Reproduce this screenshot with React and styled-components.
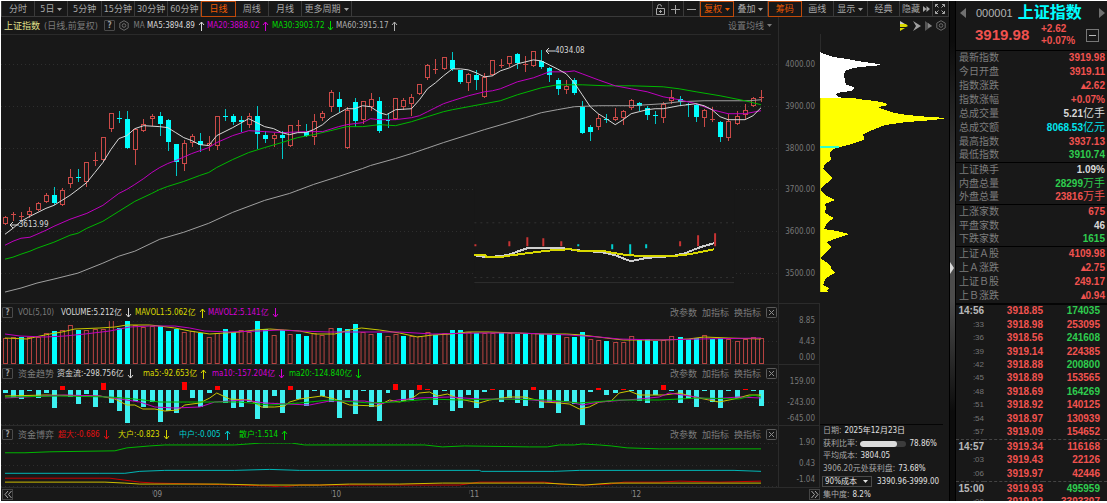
import React, { useState } from 'react';
import styled, { createGlobalStyle, css } from 'styled-components';

const RED = '#f0524f';
const GREEN = '#2ecc4e';
const CYAN = '#00ffff';
const WHITE = '#d8d8d8';
const MAGENTA = '#d400d4';
const LINE = '#2b2b2b';

const GlobalStyle = createGlobalStyle`
  * {
    box-sizing: border-box;
  }

  body {
    margin: 0;
    background: #fff;
    font-family: 'DejaVu Sans Condensed', 'Noto Sans CJK SC', sans-serif;
    font-size: 8px;
    line-height: 10px;
    color: #8a8a8a;
  }

  button, select {
    font: inherit;
    color: inherit;
    background: none;
    border: 0;
    padding: 0;
    margin: 0;
    cursor: pointer;
  }
`;

const Page = styled.div`
  display: grid;
  grid-template-columns: minmax(0, 1fr) 7px 151px;
  height: 100vh;
  padding: 1px 0 2px 1px;
  background: #fff;
`;

const Main = styled.main`
  display: grid;
  grid-template-rows: 16px minmax(0, 1fr);
  min-height: 0;
  background: #181818;
`;

const Toolbar = styled.nav`
  display: flex;
  justify-content: space-between;
  border-bottom: 1px solid #3a3a3a;
`;

const ToolGroup = styled.div`
  display: flex;
  width: ${(p) => p.$width}px;
`;

const ToolButton = styled.button`
  display: flex;
  align-items: center;
  justify-content: center;
  gap: 3px;
  flex: ${(p) => p.$grow || 33} 1 0;
  min-width: 0;
  height: 16px;
  font-size: 9px;
  white-space: nowrap;
  color: #a6a6a6;
  border: solid #3a3a3a;
  border-width: 0 1px 0 0;

  &:first-child {
    border-left-width: 1px;
  }

  ${(p) => p.$active && css`
    color: #f05a00;
    border: 1px solid #c04a0a;
  `}
`;

const Workspace = styled.div`
  display: grid;
  grid-template-columns: minmax(0, 1fr) 129px;
  min-height: 0;
`;

const Charts = styled.div`
  display: grid;
  grid-template-rows: minmax(0, 1fr) 61px 61px 62px 13px;
  min-height: 0;
`;

const Panel = styled.section`
  display: grid;
  grid-template-columns: minmax(0, 1fr) 41px;
  min-height: 0;
  border-bottom: 1px solid ${LINE};
`;

const Plot = styled.div`
  position: relative;
  display: flex;
  flex-direction: column;
  min-width: 0;
  min-height: 0;
  border-right: 1px solid ${LINE};
`;

const PlotHeader = styled.header`
  display: flex;
  align-items: center;
  justify-content: space-between;
  height: 17px;
  padding: ${(p) => (p.$main ? '0 6px 0 3px' : '0 0 0 1px')};
  white-space: nowrap;
  flex: none;
`;

const Canvas = styled.svg`
  display: block;
  width: 100%;
  flex: 1;
  min-height: 0;
`;

const Legend = styled.div`
  display: flex;
  align-items: center;
`;

const Name = styled.span`
  width: ${(p) => p.$width}px;
  color: ${(p) => p.$color || '#7b7b7b'};
  font-size: ${(p) => p.$size || 9}px;
`;

const Stat = styled.span`
  display: flex;
  align-items: center;
  gap: 3px;
  width: ${(p) => p.$width}px;
  color: ${(p) => p.$color};
`;

const HelpButton = styled.button`
  width: 11px;
  height: 11px;
  margin-right: ${(p) => p.$gap || 5}px;
  font-size: 8px;
  line-height: 9px;
  font-weight: bold;
  border: 1px solid #4a4a4a;
  border-radius: 1px;
  color: #9a9a9a;
`;

const Actions = styled.div`
  display: flex;
  align-items: center;
  gap: 5px;
  font-size: 9px;
  color: #7b7b7b;

  button {
    display: flex;
    align-items: center;
    gap: 3px;
  }
`;

const Axis = styled.div`
  display: flex;
  flex-direction: column;
  align-items: flex-end;
  padding: 12px 4px 0 0;
  border-right: 1px solid ${LINE};
  color: #777;

  span + span {
    margin-top: 11px;
  }

  span + span + span {
    margin-top: 6px;
  }
`;

const PriceAxis = styled(Axis)`
  justify-content: space-between;
  padding: 43px 4px 24px 0;
  border-right-color: transparent;

  span + span,
  span + span + span {
    margin-top: 0;
  }
`;

const Mark = styled.span`
  position: absolute;
  display: flex;
  align-items: center;
  left: ${(p) => p.$left}%;
  top: ${(p) => p.$top}%;
  color: ${WHITE};
`;

const Timeline = styled.footer`
  display: grid;
  grid-template-columns: 151fr 179fr 138fr 162fr 189fr;
`;

const Month = styled.div`
  display: flex;
  align-items: center;
  justify-content: space-between;
  padding-left: ${(p) => (p.$first ? 1 : 0)}px;

  span::before {
    content: '';
    display: inline-block;
    height: 4px;
    border-left: 1px solid #333;
    vertical-align: top;
  }
`;

const EdgeButton = styled.button`
  display: flex;
  align-items: center;
  justify-content: center;
  width: 11px;
  height: 11px;
  margin-left: ${(p) => (p.$end ? 'auto' : 0)};
  border: 1px solid #444;
`;

const Chips = styled.section`
  display: grid;
  grid-template-rows: 17px minmax(0, 270fr) minmax(0, 120fr) 77px;
  min-height: 0;
`;

const ChipHeader = styled.header`
  display: flex;
  align-items: center;
  justify-content: flex-end;
  gap: 3px;
  padding-right: 3px;

  button {
    display: flex;
  }
`;

const ChipCanvas = styled(Canvas)`
  height: 100%;
`;

const ChipInfo = styled.div`
  grid-row: 4;
  display: flex;
  flex-direction: column;
  justify-content: space-around;
  margin-right: 6px;
  padding-left: 3px;
  border-top: 1px solid #050505;
  white-space: nowrap;
`;

const ChipLine = styled.div`
  display: flex;
  align-items: center;
  gap: ${(p) => p.$gap || 3}px;
  color: #a8a8a8;

  b {
    font-weight: normal;
    color: #e0e0e0;
  }
`;

const Meter = styled.div`
  width: 46px;
  height: 6px;
  border-radius: 3px;
  background: #3c3c3c;
  overflow: hidden;

  div {
    height: 100%;
    border-radius: 3px;
    background: #dcdcdc;
  }
`;

const CostSelect = styled.label`
  display: flex;
  align-items: center;
  width: 50px;
  height: 11px;
  margin-left: -1px;
  padding: 0 3px 0 2px;
  border: 1px solid #4a4a4a;
  color: #e0e0e0;

  select {
    appearance: none;
    flex: 1;
    min-width: 0;
    line-height: 9px;
    outline: none;
  }
`;

const Splitter = styled.div`
  display: flex;
  align-items: center;
  padding-top: 34px;
  border: solid #000;
  border-width: 0 1px;
  background: linear-gradient(#0c0c0c 8%, #4c4c4c 48%, #4c4c4c 60%, #0c0c0c 82%);
`;

const Side = styled.aside`
  display: flex;
  flex-direction: column;
  min-height: 0;
  overflow: hidden;
  background: #181818;
  font-family: 'Liberation Sans', 'Noto Sans CJK SC', sans-serif;
`;

const QuoteHead = styled.header`
  height: 49px;
  flex: none;
  padding: 2px 1px 0 3px;
`;

const QuoteName = styled.div`
  display: flex;
  align-items: center;
  height: 20px;
  font-size: 11px;
  color: #b4b4b4;

  h1 {
    margin: 0 0 0 5px;
    font-size: 16px;
    line-height: 20px;
    color: ${CYAN};
  }

  button {
    display: flex;
  }

  span {
    margin-left: 10px;
  }

  button:last-child {
    margin-left: auto;
  }
`;

const QuotePrice = styled.div`
  display: flex;
  align-items: center;
  padding: 0 7px 0 16px;
  font-weight: bold;
  font-size: 10px;
  line-height: 12px;
  color: ${RED};

  strong {
    width: 66px;
    font-size: 15px;
  }

  button {
    display: flex;
    align-items: center;
    justify-content: center;
    width: 13px;
    height: 13px;
    margin-left: auto;
    border: 1px solid #777;
  }
`;

const QuoteTable = styled.table`
  width: 100%;
  flex: none;
  border-collapse: collapse;
  font-size: 10px;
  line-height: 12px;

  tbody {
    border-top: 1px solid #000;
  }

  th, td {
    height: 14px;
    padding: 0 2px 0 3px;
    white-space: nowrap;
  }

  th {
    font-weight: normal;
    text-align: left;
    color: #7d7d7d;
  }

  td {
    font-weight: bold;
    text-align: right;
  }

  small {
    font-size: 11px;
    line-height: 10px;
    font-weight: normal;
  }
`;

const Value = styled.td`
  color: ${(p) => p.$color};
`;

const TickArea = styled.div`
  flex: 1;
  min-height: 0;
  overflow: hidden;
  border-top: 2px solid #050505;
`;

const TickTable = styled.table`
  width: 100%;
  height: 104%;
  table-layout: fixed;
  border-collapse: collapse;
  font-size: 10px;
  line-height: 10px;
  font-weight: bold;

  th, td {
    padding: 0;
    text-align: right;
  }

  th {
    width: 28px;
  }

  td {
    width: 59px;
    color: ${RED};
  }

  td:last-child {
    width: auto;
    padding-right: 7px;
  }
`;

const TickRow = styled.tr`
  border-top: ${(p) => (p.$divided ? '1px dashed #444' : '0')};

  th {
    font-size: ${(p) => (p.$minute ? 10 : 8)}px;
    font-weight: ${(p) => (p.$minute ? 'bold' : 'normal')};
    color: ${(p) => (p.$minute ? '#b8b8b8' : '#757575')};
  }

  td:last-child {
    color: ${(p) => (p.$down ? GREEN : RED)};
  }
`;

// colour, high, body top, body bottom, low
const CANDLES = `r217,218,225,225 r213,215,216,221 r213,217,218,221 r208,212,216,218 r203,204,211,211 r194,196,203,203
c188,196,204,205 r189,191,206,206 r170,178,185,188 c170,178,179,182 r162,162,183,187 r152,160,161,165
r137,137,160,160 r113,113,129,131 c111,118,119,122 c111,119,148,148 r129,129,150,164 r119,124,131,131
r114,116,119,125 c112,116,124,135 c119,120,142,150 c144,144,162,176 r140,143,164,171 r134,136,143,146
c133,141,145,151 r136,143,146,150 r116,116,146,149 c109,116,117,120 c114,116,122,124 c116,120,122,131
r113,116,125,127 c106,116,134,148 c131,135,139,142 r133,135,139,146 c131,135,138,158 r125,125,146,146
r120,125,126,131 c124,132,136,136 r114,121,137,144 r111,113,118,120 r90,92,107,111 c92,99,107,111
r107,110,148,148 c98,102,121,126 r101,101,120,123 r93,99,107,110 c97,101,131,132 c113,120,121,127
r98,98,119,119 r98,100,107,109 r94,97,104,115 r84,84,94,94 r64,65,78,79 r59,69,70,73
r57,57,69,69 c52,60,69,70 c70,70,82,83 r73,74,83,90 c70,75,80,89 r73,77,97,97
r60,60,75,75 r59,65,66,67 r56,56,64,66 c53,54,63,68 r56,64,65,71 r51,51,66,66
c50,61,67,68 c67,68,75,81 c78,80,89,94 r80,86,90,93 c78,80,93,94 c101,107,133,133
c125,127,132,140 r114,118,127,129 c114,119,120,122 r108,117,120,120 r110,111,118,124 r99,100,108,109
c102,103,106,110 c106,108,115,119 c111,115,116,123 r102,104,118,122 r90,97,101,103 c96,99,102,105
c103,104,105,116 c104,105,117,121 r109,110,118,126 r107,119,120,121 c121,122,137,141 r114,121,138,140
r111,116,124,124 r104,110,115,118 r97,98,106,106 r90,97,98,101`
  .split(/\s+/)
  .map((s) => ({ up: s[0] === 'r', v: s.slice(1).split(',').map(Number) }));

const VOLUMES = `r25 r26 c26 r26 r26 r30 c32 r33 r38 c33 r33 r34 r34 r43 c35 c42 r38 r36 r37 c37 c32 c34 r31 r32
c30 r26 r30 c34 c31 r33 r31 c43 c34 r28 c33 r29 c29 c27 r30 r28 r35 c35 c34 c39 r31 r29 c30 r27 r29 c27 r27
r27 r31 c28 r30 c33 c33 r31 c30 r30 r30 c30 r30 c29 c29 r30 c29 c29 c29 r26 c26 c31 r24 r23 c22 r21 r21 r27
c23 c24 c22 r23 r27 c26 c24 c25 r28 c24 c25 r24 r22 r24 r26 r25`
  .split(/\s+/)
  .map((s) => ({ up: s[0] === 'r', h: Number(s.slice(1)) }));

const FLOWS = [
  -3, -8, -9, -1, -8, -3, -18, 4, -7, -14, -4, -17, 7, -13, -21, -33, -11, -17, -12, -32, -21, -23, 9, -8,
  -17, -3, 4, -13, -18, -17, -12, -29, -18, -6, -23, 4, -9, -16, -1, -6, -12, -28, -8, -24, -1, -17, -31, -3,
  6, -11, -10, 5, 1, -15, -1, -21, -18, -5, -18, -2, 1, -12, -8, -13, -16, 3, -18, -12, -23, -11, -14, -35,
  -2, 2, -5, -3, 1, -1, -11, -13, -5, 5, -1, -13, -9, -17, -1, -12, -18, -1, -8, 1, -1, -16,
];

const PRICE_LINES = [
  ['#a0a0a0', '5,293 21,289 37,284 54,280 78,274 103,264 119,257 135,252 160,240 184,233 209,224 233,213 265,201 290,194 314,185 339,177 363,169 371,166 396,159 412,154 444,143 485,130 526,118 542,113 558,110 575,107 599,106 632,106 664,104 680,102 705,101 738,101 750,101 762,100'],
  ['#00b800', '5,260 13,258 21,255 30,252 37,249 54,243 70,236 78,234 87,229 103,222 119,212 135,202 152,194 160,190 168,187 184,182 200,176 209,173 217,168 233,160 249,153 265,148 282,143 298,138 314,135 331,131 347,127 363,127 380,125 396,126 412,122 428,117 444,112 453,110 469,107 485,104 501,101 518,95 542,88 558,85 583,85 607,86 632,86 664,87 680,89 697,92 721,96 746,101 762,105'],
  ['#c000c0', '5,246 13,242 21,239 30,238 37,235 46,231 54,227 70,220 87,214 95,210 103,206 111,200 119,194 127,190 135,185 144,179 152,173 160,168 168,164 176,161 192,154 209,148 217,143 233,136 249,131 265,132 282,133 306,132 323,132 339,127 347,125 363,123 371,119 380,120 396,120 412,118 420,116 428,112 444,104 453,101 469,96 485,92 493,91 501,89 518,82 534,78 542,75 550,72 567,72 575,71 583,74 599,80 616,86 632,89 648,92 664,97 680,100 697,104 713,110 729,114 746,114 762,111'],
  ['#d8d8d8', '5,235 13,229 21,222 30,217 46,209 54,206 62,201 70,196 78,190 87,183 95,173 103,163 111,150 119,139 127,136 135,129 144,126 160,127 168,128 176,133 184,138 192,141 200,145 209,146 217,136 233,128 249,119 265,127 274,129 282,133 290,135 298,133 306,133 314,130 323,125 331,118 347,109 355,109 363,106 371,107 380,113 387,115 396,110 412,109 420,100 428,89 436,83 444,76 453,69 461,69 469,70 477,73 485,77 493,76 501,71 510,68 518,64 526,62 534,60 542,61 550,65 558,69 567,74 575,83 583,95 591,107 599,114 607,119 616,125 624,120 632,114 640,112 648,110 656,109 664,109 680,106 697,104 705,106 713,110 721,117 729,120 746,120 754,116 762,108'],
];

const VOLUME_LINES = [
  ['#c8c800', '5,338 27,339 40,336 50,334 62,332 75,329 100,328 115,327 127,325 150,325 160,326 175,328 190,331 210,334 225,333 240,332 255,330 270,329 285,330 300,331 315,334 335,334 350,330 362,328 380,330 400,333 418,337 433,335 452,334 468,332 490,332 518,333 542,334 567,334 583,335 607,338 624,340 648,340 664,340 689,339 705,337 729,338 762,339'],
  ['#c000c0', '5,334 20,336 45,337 65,336 85,334 110,331 130,327 150,326 175,326 190,328 205,331 230,332 260,331 280,330 300,331 330,332 400,332 433,334 480,333 520,333 570,335 600,337 620,339 660,340 700,339 762,338'],
];

const FLOW_LINES = [
  ['#c8c800', '5,396 46,395 100,396 115,399 127,405 135,405 143,409 155,409 165,411 178,410 185,405 200,403 210,398 217,393 230,399 250,400 262,407 275,407 285,406 290,402 300,399 322,396 335,399 350,405 378,406 390,400 400,402 413,398 420,393 430,392 438,396 448,394 460,399 470,401 480,403 490,400 510,397 525,397 545,402 560,403 570,404 580,409 590,407 600,402 612,401 620,393 630,391 640,395 665,395 680,393 695,397 705,399 720,402 735,399 750,395 762,395'],
  ['#c000c0', '5,398 45,396 65,395 100,396 120,399 140,402 155,407 175,408 200,407 215,402 245,400 265,403 310,405 330,401 365,401 380,404 398,400 420,398 450,397 480,399 520,399 545,401 570,402 583,405 600,402 640,399 660,397 670,393 690,396 710,399 740,397 762,398'],
  ['#00b800', '5,397 60,396 110,397 135,399 160,402 240,402 270,405 300,403 330,400 370,403 396,402 430,399 460,400 500,399 550,400 580,403 620,400 660,400 700,398 740,399 755,395 762,397'],
];

const GAME_LINES = [
  ['#00b800', '5,452 25,452 50,451 115,450 127,447 150,445 165,444 235,444 262,442 292,442 305,444 425,444 443,446 465,445 530,446 548,446 560,444 575,444 583,443 600,444 612,445 628,447 660,448 762,448'],
  ['#00b8b8', '5,473 100,473 125,473 140,471 165,470 235,470 270,469 300,470 480,470 482,471 555,471 580,470 735,470 762,471'],
  ['#c80000', '5,478 110,478 125,480 140,482 155,483 200,484 240,485 270,486 282,487 300,485 460,485 480,482 545,482 560,484 585,485 610,484 625,482 660,482 680,481 720,482 762,481'],
  ['#d0c000', '5,482 105,482 125,483 140,484 220,484 260,485 320,485 350,484 400,484 443,483 545,483 585,485 612,483 762,483'],
];

const SHAPE_WHITE = '0,52 2,53 7,55 13,57 27,59 37,61 52,63 63,65 50,66 33,68 25,71 24,75 25,80 26,85 31,86 35,88 31,91 22,92 15,94 17,96 22,98 0,98';
const SHAPE_YELLOW = '0,98 33,98 38,99 55,101 65,103 68,105 58,107 65,110 68,111 75,113 87,115 110,117 127,118 113,120 87,122 65,125 55,129 48,132 42,135 44,137 44,140 37,142 28,145 20,147 13,149 10,153 11,160 5,164 3,169 8,173 12,178 7,183 2,187 0,190 5,195 15,200 5,204 6,208 5,213 14,218 7,223 4,229 17,231 29,234 20,237 7,242 11,247 3,255 0,258 6,262 11,266 11,269 15,273 6,278 3,285 9,288 7,291 9,292 0,292';

const QUOTES = [
  [
    ['最新指数', '3919.98', RED],
    ['今日开盘', '3919.11', RED],
    ['指数涨跌', '▴2.62', RED],
    ['指数涨幅', '+0.07%', RED],
    ['总成交量', '5.21', WHITE, '亿手'],
    ['总成交额', '8068.53', '#00e5ee', '亿元'],
    ['最高指数', '3937.13', RED],
    ['最低指数', '3910.74', GREEN],
  ],
  [
    ['上证换手', '1.09%', WHITE],
    ['内盘总量', '28299', GREEN, '万手'],
    ['外盘总量', '23816', RED, '万手'],
  ],
  [
    ['上涨家数', '675', RED],
    ['平盘家数', '46', WHITE],
    ['下跌家数', '1615', GREEN],
  ],
  [
    ['上证Ａ股', '4109.98', RED],
    ['上Ａ涨跌', '▴2.75', RED],
    ['上证Ｂ股', '249.17', RED],
    ['上Ｂ涨跌', '▴0.94', RED],
  ],
];

const TICKS = [
  ['14:56', '3918.85', '174035', true],
  [':33', '3918.98', '253095'],
  [':36', '3918.56', '241608', true],
  [':39', '3919.14', '224385'],
  [':42', '3918.88', '200800', true],
  [':45', '3918.89', '153565'],
  [':48', '3918.69', '164269', true],
  [':51', '3918.92', '140125'],
  [':54', '3918.97', '130939'],
  [':57', '3919.09', '154652'],
  ['14:57', '3919.34', '116168'],
  [':03', '3919.43', '22126'],
  [':06', '3919.97', '42446'],
  ['15:00', '3919.93', '495959', true],
  [':00', '3919.92', '3393397'],
];

const PERIODS = ['分时', '5日', '5分钟', '15分钟', '30分钟', '60分钟', '日线', '周线', '月线'];

const barX = (i) => Math.round(4 + i * 8.14);

function Caret() {
  return (
    <svg width="5" height="3" viewBox="0 0 5 3"><path d="M0 0h5L2.5 3z" fill="currentColor" /></svg>
  );
}

function Arrow({ down }) {
  return (
    <svg width="7" height="10" viewBox="0 0 7 10" fill="none" stroke="currentColor">
      <path d={down ? 'M3.5 0v9M1 6l2.5 3L6 6' : 'M3.5 10V1M1 4l2.5-3L6 4'} />
    </svg>
  );
}

function Hex() {
  return (
    <svg width="10" height="11" viewBox="0 0 10 11" fill="none" stroke="#6a6a6a">
      <path d="M5 .7l4.2 2.4v4.8L5 10.3.8 7.9V3.1z" />
      <circle cx="5" cy="5.5" r="1.8" />
    </svg>
  );
}

function Lines({ data }) {
  return data.map(([color, points]) => (
    <polyline key={color} points={points} transform="translate(-1 0)" fill="none" stroke={color} />
  ));
}

function Grid({ rows, end = 778 }) {
  return rows.map((y) => (
    <path key={y} d={`M0 ${y}.5H${end}`} stroke="#2e2e2e" strokeDasharray="1 3" shapeRendering="crispEdges" />
  ));
}

function Candle({ x, up, v: [high, top, bottom, low] }) {
  if (!up) {
    return (
      <g fill={CYAN}>
        <path d={`M${x + 0.5} ${high}V${low + 1}`} stroke="#00c8c8" />
        <rect x={x - 2} y={top} width="5" height={Math.max(1, bottom - top)} />
      </g>
    );
  }
  return (
    <g fill="#181818" stroke="#cc4a48">
      <path d={`M${x + 0.5} ${high}V${low + 1}`} />
      {bottom - top < 2
        ? <path d={`M${x - 2} ${top + 0.5}h5`} />
        : <rect x={x - 1.5} y={top + 0.5} width="4" height={bottom - top - 1} />}
    </g>
  );
}

function PriceChart() {
  return (
    <Canvas viewBox="0 34 778 270" preserveAspectRatio="none">
      <path d="M0 34.5H771" stroke={LINE} />
      <Grid rows={[64, 106, 148, 190, 232, 274]} />
      <g shapeRendering="crispEdges">
        {CANDLES.map((c, i) => <Candle key={i} x={barX(i)} {...c} />)}
      </g>
      <Lines data={PRICE_LINES} />
      <path d="M474 185h260v105H474z" fill="#181818" />
      <path d="M474 223.5h260M474 278.5h260" stroke="#333" strokeDasharray="2 4" />
      <path d="M474 283.5h260" stroke="#2e2e2e" />
      <path d="M475 245v2M509 242v5M527 238v9M543 239v8M561 242v5M680 242v5M698 236v11M715 234v13" stroke="#c83434" strokeWidth="2" />
      <path d="M578 245v2M612 245v5M630 245v12M646 245v4" stroke="#00d0d0" strokeWidth="2" />
      <g fill="none" strokeWidth="2" shapeRendering="crispEdges">
        <polyline stroke="#cfcfcf" points="474,256 485,258 500,257 510,255 518,252 527,249 563,249 575,251 602,253 615,256 625,260 631,262 645,259 655,258 672,257 685,254 700,248 714,244" />
        <polyline stroke="#d8d800" points="474,256 485,256 486,258 500,258 512,256 535,253 552,251 570,250 580,252 604,252 620,255 640,257 672,257 690,255 714,250" />
      </g>
    </Canvas>
  );
}

function VolumeChart() {
  return (
    <Canvas viewBox="0 321 778 43" preserveAspectRatio="none">
      <Grid rows={[321, 341]} />
      <g shapeRendering="crispEdges">
        {VOLUMES.map(({ up, h }, i) => (up
          ? <rect key={i} x={barX(i) - 1.5} y={363.5 - h} width="4" height={h} fill="#181818" stroke="#b84442" />
          : <rect key={i} x={barX(i) - 2} y={363 - h} width="5" height={h + 1} fill={CYAN} />))}
      </g>
      <Lines data={VOLUME_LINES} />
    </Canvas>
  );
}

function FlowChart() {
  return (
    <Canvas viewBox="0 382 778 43" preserveAspectRatio="none">
      <Grid rows={[382, 402, 424]} />
      <g shapeRendering="crispEdges">
        {FLOWS.map((f, i) => (
          <rect
            key={i}
            x={barX(i) - 2}
            y={f > 0 ? 390 - f : 390}
            width="5"
            height={Math.abs(f)}
            fill={f > 0 ? '#ff0000' : '#3cf0f0'}
          />
        ))}
      </g>
      <Lines data={FLOW_LINES} />
    </Canvas>
  );
}

function GameChart() {
  return (
    <Canvas viewBox="0 442 778 45" preserveAspectRatio="none">
      <Grid rows={[442, 464, 486]} />
      <Lines data={GAME_LINES} />
    </Canvas>
  );
}

function Indicator({ name, nameWidth, nameSize, stats, labels, children }) {
  return (
    <Panel>
      <Plot>
        <PlotHeader>
          <Legend>
            <HelpButton>?</HelpButton>
            <Name $width={nameWidth} $size={nameSize}>{name}</Name>
            {stats.map(([text, color, width, down]) => (
              <Stat key={text} $color={color} $width={width}>{text}<Arrow down={down} /></Stat>
            ))}
          </Legend>
          <Actions>
            <button>改参数</button>
            <button>加指标</button>
            <button>换指标</button>
            <button aria-label="关闭">
              <svg width="12" height="11" viewBox="0 0 12 11" fill="none" stroke="#5a5a5a">
                <rect x=".5" y=".5" width="10" height="10" rx="1" />
                <path d="M3 3l5 5M8 3L3 8" stroke="#8a8a8a" />
              </svg>
            </button>
          </Actions>
        </PlotHeader>
        {children}
      </Plot>
      <Axis>{labels.map((l) => <span key={l}>{l}</span>)}</Axis>
    </Panel>
  );
}

function TopBar() {
  const [period, setPeriod] = useState('日线');
  return (
    <Toolbar>
      <ToolGroup $width={351}>
        {PERIODS.map((p) => (
          <ToolButton key={p} $active={p === period} onClick={() => setPeriod(p)}>
            {p}{p === '5日' && <Caret />}
          </ToolButton>
        ))}
        <ToolButton $grow={50}>更多周期<Caret /></ToolButton>
      </ToolGroup>
      <ToolGroup $width={297}>
        <ToolButton $grow={16} aria-label="锁定">
          <svg width="11" height="11" viewBox="0 0 11 11" fill="none" stroke="currentColor">
            <path d="M1.5 4.5h8v6h-8zM2.5 4.5V2.500a2 2 0 0 1 4 0M4 7.500h3M5.500 6v3" />
          </svg>
        </ToolButton>
        <ToolButton $grow={14} aria-label="放大">
          <svg width="9" height="9" viewBox="0 0 9 9" stroke="currentColor"><path d="M0 4.500h9M4.500 0v9" /></svg>
        </ToolButton>
        <ToolButton $grow={16} aria-label="缩小">
          <svg width="9" height="9" viewBox="0 0 9 9" stroke="currentColor"><path d="M0 4.500h9" /></svg>
        </ToolButton>
        <ToolButton $grow={34} $active>复权<Caret /></ToolButton>
        <ToolButton $grow={34}>叠加<Caret /></ToolButton>
        <ToolButton $grow={34} $active>筹码</ToolButton>
        <ToolButton $grow={32}>画线</ToolButton>
        <ToolButton $grow={35}>显示<Caret /></ToolButton>
        <ToolButton $grow={33}>经典</ToolButton>
        <ToolButton $grow={33}>
          隐藏
          <svg width="7" height="6" viewBox="0 0 7 6" fill="currentColor"><path d="M0 0l3.500 3L0 6zM3.500 0L7 3 3.500 6z" /></svg>
        </ToolButton>
        <ToolButton $grow={16} aria-label="全屏">
          <svg width="10" height="10" viewBox="0 0 10 10" fill="none" stroke="currentColor">
            <path d="M.5 3V.5H3M.5.5l3 3M7 .5h2.500V3M9.500.5l-3 3M.5 7v2.500H3M.5 9.500l3-3M9.500 7v2.500H7M9.500 9.500l-3-3" />
          </svg>
        </ToolButton>
      </ToolGroup>
    </Toolbar>
  );
}

function ChipPanel() {
  const ratio = 78.86;
  return (
    <Chips>
      <ChipHeader>
        <button aria-label="筹码分布">
          <svg width="10" height="10" viewBox="0 0 10 10">
            <path d="M1 0l5 3H1z" fill="#ccc" />
            <path d="M1 3h6l2 2-2 1H1zM1 7h5l-5 3z" fill="#d8d800" />
          </svg>
        </button>
        <button aria-label="远期筹码">
          <svg width="9" height="10" viewBox="0 0 9 10"><path d="M1 0l8 5-8 5 3-5z" fill="#a0a0a0" /></svg>
        </button>
        <button aria-label="近期筹码">
          <svg width="9" height="10" viewBox="0 0 9 10">
            <path d="M1 0l7 5-7 5z" fill="#555" />
            <path d="M4 2l4 3-4 2z" fill="#888" />
          </svg>
        </button>
        <button aria-label="设置"><Hex /></button>
      </ChipHeader>
      <ChipCanvas viewBox="0 34 129 270" preserveAspectRatio="none" shapeRendering="crispEdges">
        <path d="M.5 34V52" stroke={LINE} />
        <polygon points={SHAPE_WHITE} fill="#fff" />
        <polygon points={SHAPE_YELLOW} fill="#ffff00" />
        <path d="M.5 98V292" stroke="#d8d800" />
        <path d="M0 147h19" stroke="#30ffc8" strokeWidth="2" />
      </ChipCanvas>
      <ChipInfo>
        <ChipLine><span>日期:</span><b>2025年12月23日</b></ChipLine>
        <ChipLine>
          <span>获利比率:</span>
          <Meter><div style={{ width: `${ratio}%` }} /></Meter>
          <b>{ratio}%</b>
        </ChipLine>
        <ChipLine><span>平均成本:</span><b>3804.05</b></ChipLine>
        <ChipLine><span>3906.20元处获利盘:</span><b>73.68%</b></ChipLine>
        <ChipLine $gap={5}>
          <CostSelect>
            <select aria-label="成本区间" defaultValue="90">
              <option value="90">90%成本</option>
              <option value="70">70%成本</option>
            </select>
            <Caret />
          </CostSelect>
          <b>3390.96-3999.00</b>
        </ChipLine>
        <ChipLine><span>集中度:</span><b>8.2%</b></ChipLine>
      </ChipInfo>
    </Chips>
  );
}

function QuotePanel() {
  return (
    <Side>
      <QuoteHead>
        <QuoteName>
          <button aria-label="上一个"><svg width="7" height="10" viewBox="0 0 7 10"><path d="M7 0v10L1 5z" fill="#707070" /></svg></button>
          <span>000001</span>
          <h1>上证指数</h1>
          <button aria-label="下一个"><svg width="7" height="10" viewBox="0 0 7 10"><path d="M0 0v10l6-5z" fill="#707070" /></svg></button>
        </QuoteName>
        <QuotePrice>
          <strong>3919.98</strong>
          <span>+2.62<br />+0.07%</span>
          <button aria-label="收起"><svg width="7" height="1" viewBox="0 0 7 1"><path d="M0 .5h7" stroke="#bbb" /></svg></button>
        </QuotePrice>
      </QuoteHead>
      <QuoteTable>
        {QUOTES.map((group) => (
          <tbody key={group[0][0]}>
            {group.map(([label, value, color, unit]) => (
              <tr key={label}>
                <th scope="row">{label}</th>
                <Value $color={color}>{value}{unit && <small>{unit}</small>}</Value>
              </tr>
            ))}
          </tbody>
        ))}
      </QuoteTable>
      <TickArea>
        <TickTable>
          <tbody>
            {TICKS.map(([time, price, volume, down], i) => (
              <TickRow key={time} $minute={time.length === 5} $divided={i > 0 && time.length === 5} $down={down}>
                <th scope="row">{time}</th>
                <td>{price}</td>
                <td>{volume}</td>
              </TickRow>
            ))}
          </tbody>
        </TickTable>
      </TickArea>
    </Side>
  );
}

export default function App() {
  return (
    <>
      <GlobalStyle />
      <Page>
        <Main>
          <TopBar />
          <Workspace>
            <Charts>
              <Panel>
                <Plot>
                  <PlotHeader $main>
                    <Legend>
                      <Name $width={40} $color="#e0e08a">上证指数</Name>
                      <Name $width={60}>(日线,前复权)</Name>
                      <HelpButton $gap={4}>?</HelpButton>
                      <Hex />
                      <Stat $color="#7b7b7b" $width={18}>&nbsp;&nbsp;MA</Stat>
                      <Stat $color={WHITE} $width={60}>MA5:3894.89<Arrow /></Stat>
                      <Stat $color={MAGENTA} $width={65}>MA20:3888.02<Arrow /></Stat>
                      <Stat $color="#00d800" $width={64}>MA30:3903.72<Arrow down /></Stat>
                      <Stat $color="#b0b0b0" $width={64}>MA60:3915.17<Arrow /></Stat>
                    </Legend>
                    <Actions><button>设置均线<Caret /></button></Actions>
                  </PlotHeader>
                  <PriceChart />
                  <Mark $left={70} $top={10}>
                    <svg width="10" height="8" viewBox="0 0 10 8" fill="none" stroke="currentColor"><path d="M10 4H1M4 1L1 4l3 3" /></svg>
                    4034.08
                  </Mark>
                  <Mark $left={1} $top={71}>
                    <svg width="10" height="8" viewBox="0 0 10 8" fill="none" stroke="currentColor"><path d="M10 4H1M4 1L1 4l3 3" /></svg>
                    3613.99
                  </Mark>
                </Plot>
                <PriceAxis>
                  {[4000, 3900, 3800, 3700, 3600, 3500].map((p) => <span key={p}>{p.toFixed(2)}</span>)}
                </PriceAxis>
              </Panel>
              <Indicator
                name="VOL(5,10)"
                nameWidth={43}
                nameSize={8}
                stats={[
                  ['VOLUME:5.212亿', WHITE, 74, true],
                  ['MAVOL1:5.062亿', '#d8d800', 73],
                  ['MAVOL2:5.141亿', MAGENTA, 73, true],
                ]}
                labels={['8.85', '4.43', '0.00']}
              >
                <VolumeChart />
              </Indicator>
              <Indicator
                name="资金趋势"
                nameWidth={39}
                stats={[
                  ['资金流:-298.756亿', WHITE, 86, true],
                  ['ma5:-92.653亿', '#d8d800', 69],
                  ['ma10:-157.204亿', MAGENTA, 77, true],
                  ['ma20:-124.840亿', '#00d800', 77, true],
                ]}
                labels={['159.00', '-243.00', '-645.00']}
              >
                <FlowChart />
              </Indicator>
              <Indicator
                name="资金博弈"
                nameWidth={40}
                stats={[
                  ['超大:-0.686', '#e01010', 60, true],
                  ['大户:-0.823', '#d8d800', 61, true],
                  ['中户:-0.005', '#00d0d0', 60],
                  ['散户:1.514', '#00d800', 60],
                ]}
                labels={['1.90', '0.43', '-1.04']}
              >
                <GameChart />
              </Indicator>
              <Timeline>
                <Month $first>
                  <EdgeButton aria-label="向前">
                    <svg width="8" height="7" viewBox="0 0 8 7" fill="none" stroke="#aaa"><path d="M4 0L1 3.500 4 7M7.500 0l-3 3.500 3 3.500" /></svg>
                  </EdgeButton>
                </Month>
                <Month><span>09</span></Month>
                <Month><span>10</span></Month>
                <Month><span>11</span></Month>
                <Month>
                  <span>12</span>
                  <EdgeButton $end aria-label="向后">
                    <svg width="8" height="7" viewBox="0 0 8 7" fill="none" stroke="#aaa"><path d="M.5 0l3 3.500-3 3.500M4 0l3 3.500L4 7" /></svg>
                  </EdgeButton>
                </Month>
              </Timeline>
            </Charts>
            <ChipPanel />
          </Workspace>
        </Main>
        <Splitter>
          <svg width="4" height="12" viewBox="0 0 4 12"><path d="M0 0l4 6-4 6z" fill="#d8d8d8" /></svg>
        </Splitter>
        <QuotePanel />
      </Page>
    </>
  );
}
